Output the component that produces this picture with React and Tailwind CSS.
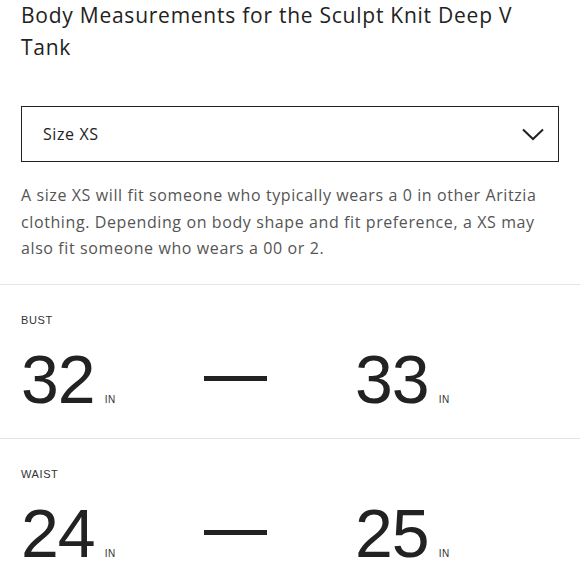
const rows = [
  { label: "BUST", from: "32", to: "33" },
  { label: "WAIST", from: "24", to: "25" },
];

const Measure = ({ value }) => (
  <div className="flex items-baseline">
    <span className="text-[68px] leading-none text-[#222] tracking-[-1px]">{value}</span>
    <span className="ml-[10px] text-[10px] tracking-[0.5px] text-[#333]">IN</span>
  </div>
);

export default function App() {
  return (
    <div className="w-[580px] h-[580px] overflow-hidden bg-white font-['Open_Sans','Liberation_Sans',sans-serif]">
      <div className="px-[21px]">
        {/* Title */}
        <h1 className="-mt-[1px] text-[21px] leading-[32px] tracking-[0.75px] text-[#222] font-normal">
          Body Measurements for the Sculpt Knit Deep V
          <br />
          Tank
        </h1>

        {/* Size select */}
        <div className="mt-[43px] h-[56px] border-[1.5px] border-[#222] flex items-center justify-between pl-[21px] pr-[14px]">
          <span className="text-[16px] tracking-[0.6px] text-[#222]">Size XS</span>
          <svg width="22" height="13" viewBox="0 0 22 13" fill="none">
            <path d="M1 1.5 L11 11 L21 1.5" stroke="#222" strokeWidth="2" />
          </svg>
        </div>

        {/* Description */}
        <p className="mt-[20px] text-[16px] leading-[26.5px] tracking-[0.6px] text-[#555] whitespace-nowrap">
          A size XS will fit someone who typically wears a 0 in other Aritzia
          <br />
          clothing. Depending on body shape and fit preference, a XS may
          <br />
          also fit someone who wears a 00 or 2.
        </p>
      </div>

      {/* Measurements */}
      <div className="mt-[22px]">
        {rows.map((r) => (
          <div key={r.label} className="border-t border-[#e5e5e5] px-[21px] pt-[27px] pb-[25px]">
            <div className="text-[11px] leading-[16px] tracking-[0.6px] text-[#333] font-['Liberation_Sans',sans-serif]">{r.label}</div>
            <div className="mt-[17px] grid grid-cols-[183px_151px_1fr] items-center font-['Liberation_Sans',sans-serif]">
              <Measure value={r.from} />
              <div className="w-[63px] h-[5px] bg-[#222]" />
              <Measure value={r.to} />
            </div>
          </div>
        ))}
      </div>
    </div>
  );
}
